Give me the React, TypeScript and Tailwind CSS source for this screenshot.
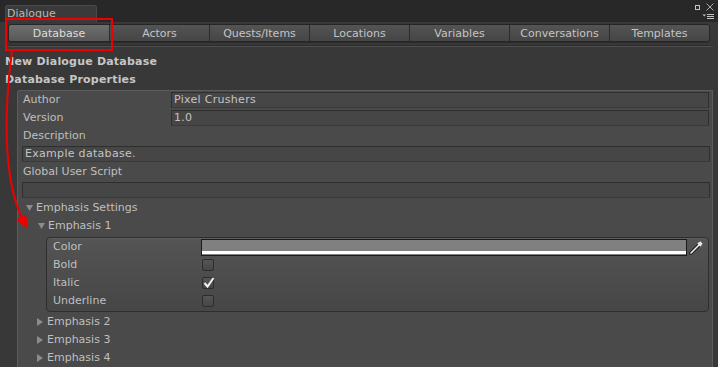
import { ReactNode } from 'react';

const TABS = ['Database', 'Actors', 'Quests/Items', 'Locations', 'Variables', 'Conversations', 'Templates'];

function Field({ value = '', wide = false }: { value?: string; wide?: boolean }) {
    return (
        <div
            className={`h-[16px] my-[1px] bg-[#464646] border border-[#2e2e2e] border-b-[#3a3a3a] text-[#c4c4c4] leading-[14px] pl-[2px] tracking-[0.3px] ${wide ? 'ml-[4px] w-[688px]' : 'w-[538px]'}`}
        >
            {value}
        </div>
    );
}

function Row({ children, className = '' }: { children: ReactNode; className?: string }) {
    return <div className={`h-[18px] flex items-center ${className}`}>{children}</div>;
}

function Foldout({ open, label, indent }: { open: boolean; label: string; indent: string }) {
    return (
        <Row className={indent}>
            <span className="w-[10px] flex items-center">
                {open ? (
                    <svg width="7" height="6" viewBox="0 0 7 6"><path d="M0 0 L7 0 L3.5 6 Z" fill="#8c8c8c" /></svg>
                ) : (
                    <svg width="6" height="8" viewBox="0 0 6 8"><path d="M0 0 L6 4 L0 8 Z" fill="#8c8c8c" /></svg>
                )}
            </span>
            <span>{label}</span>
        </Row>
    );
}

function Checkbox({ checked = false }: { checked?: boolean }) {
    return (
        <div className="ml-[1px] w-[12px] h-[12px] rounded-[2px] border border-[#2c2c2c] bg-[linear-gradient(#555555,#464646)] relative">
            {checked && (
                <svg className="absolute -left-[1px] -top-[2px]" width="14" height="13" viewBox="0 0 14 13">
                    <path d="M2.5 7 L5.5 10.5 L11.5 2" stroke="#f2f2f2" strokeWidth="2" fill="none" />
                </svg>
            )}
        </div>
    );
}

export default function App() {
    return (
        <div
            className="relative w-[718px] h-[367px] overflow-hidden bg-[#383838] text-[11px] text-[#bfbfbf]"
            style={{ fontFamily: '"DejaVu Sans", Verdana, sans-serif' }}
        >
            {/* window title strip */}
            <div className="h-[22px] bg-[#282828] flex items-end relative">
                <div className="ml-[5px] w-[92px] h-[17px] bg-[#3a3a3a] border border-[#4a4a4a] border-b-0 rounded-t-[3px] pl-[1px] leading-[16px] text-[#b8b8b8]">
                    Dialogue
                </div>
                <svg className="absolute left-[694px] top-[2px]" width="22" height="19" viewBox="0 0 22 19">
                    <rect x="1.5" y="3.5" width="4" height="4" stroke="#c4c4c4" fill="none" />
                    <path d="M12.5 1.5 L19.5 8.5 M19.5 1.5 L12.5 8.5" stroke="#a8a8a8" strokeWidth="1" />
                    <path d="M8.5 12.5 L12 12.5 L10.25 14.5 Z" fill="#c4c4c4" />
                    <path d="M13 12.5 H20 M13 14.5 H20 M13 16.5 H20" stroke="#c4c4c4" strokeWidth="1" />
                </svg>
            </div>

            {/* toolbar tabs */}
            <div className="mt-[2px] ml-[8px] w-[702px] h-[18px] flex rounded-[3px] border border-[#262626] overflow-hidden shadow-[0_1px_0_#2a2a2a]">
                {TABS.map((tab, i) => (
                    <div
                        key={tab}
                        className={`${i === TABS.length - 1 ? 'flex-1' : 'w-[100px]'} h-full flex items-center justify-center leading-none ${i > 0 ? 'border-l border-[#2c2c2c]' : ''} ${i === 0 ? 'bg-[linear-gradient(#6e6e6e,#585858)] text-[#dcdcdc]' : 'bg-[linear-gradient(#545454,#454545)] text-[#c4c4c4]'}`}
                    >
                        {tab}
                    </div>
                ))}
            </div>

            <div className="mt-[3px] mx-[5px] h-[2px] bg-[#505050] border-t border-[#2c2c2c]" />

            {/* headers */}
            <div className="mt-[6px] pl-[5px] font-bold text-[#c6c6c6] leading-[18px] tracking-[0.2px]">
                <div>New Dialogue Database</div>
                <div>Database Properties</div>
            </div>

            {/* properties box */}
            <div className="mt-[1px] ml-[17px] w-[696px] h-[300px] bg-[#4a4a4a] border-t border-l border-r border-[#5c5c5c] rounded-tl-[3px] leading-[18px]">
                <Row>
                    <span className="w-[153px] pl-[5px]">Author</span>
                    <Field value="Pixel Crushers" />
                </Row>
                <Row>
                    <span className="w-[153px] pl-[5px]">Version</span>
                    <Field value="1.0" />
                </Row>
                <Row>
                    <span className="pl-[5px]">Description</span>
                </Row>
                <Row>
                    <Field value="Example database." wide />
                </Row>
                <Row>
                    <span className="pl-[5px]">Global User Script</span>
                </Row>
                <Row>
                    <Field wide />
                </Row>
                <Foldout open label="Emphasis Settings" indent="pl-[8px]" />
                <Foldout open label="Emphasis 1" indent="pl-[20px]" />

                <div className="mt-[2px] ml-[28px] w-[663px] h-[75px] rounded-[4px] border border-[#2e2e2e] bg-[linear-gradient(#545454,#464646)] shadow-[inset_0_1px_0_#5e5e5e]">
                    <Row>
                        <span className="w-[154px] pl-[6px]">Color</span>
                        <div className="w-[486px] h-[17px] border border-[#1c1c1c] bg-[#808080] flex flex-col justify-end">
                            <div className="h-[3px] bg-white mb-[1px]" />
                        </div>
                        <svg className="ml-[2px]" width="15" height="15" viewBox="0 0 15 15">
                            <path d="M2 13 L10 5" stroke="#1a1a1a" strokeWidth="3.5" strokeLinecap="round" />
                            <path d="M2 13 L10 5" stroke="#f4f4f4" strokeWidth="1.6" strokeLinecap="round" />
                            <path d="M9 3 L12 6 M10.5 2 L13 4.5" stroke="#e8e8e8" strokeWidth="2" />
                        </svg>
                    </Row>
                    <Row>
                        <span className="w-[154px] pl-[6px]">Bold</span>
                        <Checkbox />
                    </Row>
                    <Row>
                        <span className="w-[154px] pl-[6px]">Italic</span>
                        <Checkbox checked />
                    </Row>
                    <Row>
                        <span className="w-[154px] pl-[6px]">Underline</span>
                        <Checkbox />
                    </Row>
                </div>

                <div className="mt-[1px]">
                    <Foldout open={false} label="Emphasis 2" indent="pl-[19px]" />
                    <Foldout open={false} label="Emphasis 3" indent="pl-[19px]" />
                    <Foldout open={false} label="Emphasis 4" indent="pl-[19px]" />
                </div>
            </div>

            {/* red annotation */}
            <div className="absolute left-[5px] top-[18px] w-[108px] h-[33px] border-2 border-[#ee0000]" />
            <svg className="absolute left-0 top-0 pointer-events-none" width="60" height="240" viewBox="0 0 60 240">
                <path d="M12 51 C 4 110, 3 178, 22 218" stroke="#ee0000" strokeWidth="2" fill="none" />
                <path d="M28 229 L16 220 L26 214 Z" fill="#ee0000" />
            </svg>
        </div>
    );
}
